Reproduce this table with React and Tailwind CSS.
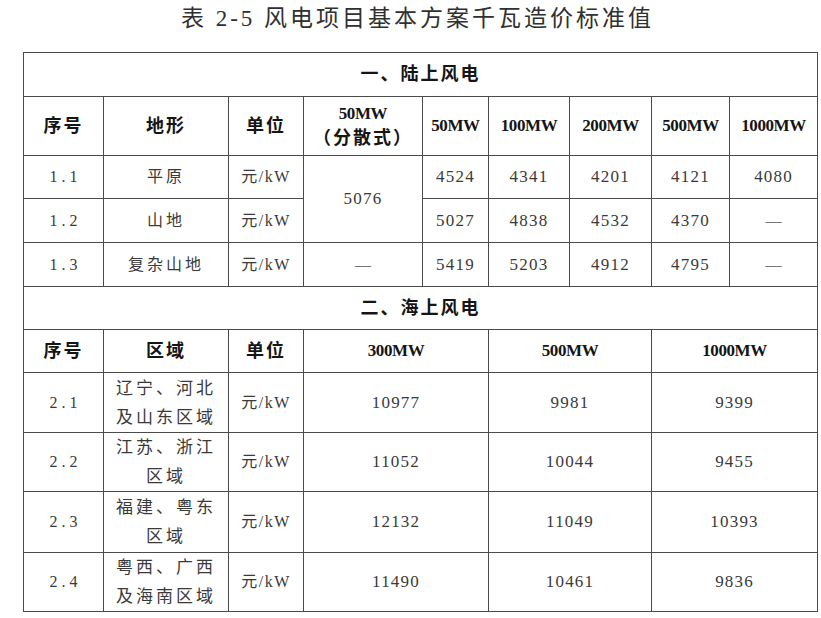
import React from 'react';

const font = { fontFamily: "'Liberation Serif', 'Noto Sans CJK SC', serif" };

const cell = 'border-[1.5px] border-[#4b4b4b] text-center align-middle p-0';
const head = `${cell} font-bold text-[#151515] text-[18px] tracking-[2px]`;
const mw = `${cell} font-bold text-[#151515] text-[17px] tracking-[-0.4px]`;
const body = `${cell} text-[#3a3a3a] text-[17px] tracking-[1.2px]`;
const unit = `${cell} text-[#3a3a3a] text-[16px] tracking-[1.5px]`;
const num = `${cell} text-[#3a3a3a] text-[16px] tracking-[4px] pl-[4px]`;
const zh = `${cell} text-[#3a3a3a] text-[16px] tracking-[3px]`;
const dash = `${cell} text-[#777] text-[16px]`;

const land = [
  { no: '1.1', name: '平原', vals: ['4524', '4341', '4201', '4121', '4080'] },
  { no: '1.2', name: '山地', vals: ['5027', '4838', '4532', '4370', '—'] },
  { no: '1.3', name: '复杂山地', vals: ['5419', '5203', '4912', '4795', '—'] },
];

const sea = [
  { no: '2.1', lines: ['辽宁、河北', '及山东区域'], vals: ['10977', '9981', '9399'], h: 'h-[60px]' },
  { no: '2.2', lines: ['江苏、浙江', '区域'], vals: ['11052', '10044', '9455'], h: 'h-[59px]' },
  { no: '2.3', lines: ['福建、粤东', '区域'], vals: ['12132', '11049', '10393'], h: 'h-[61px]' },
  { no: '2.4', lines: ['粤西、广西', '及海南区域'], vals: ['11490', '10461', '9836'], h: 'h-[58px]' },
];

const Val = ({ v }) => (
  <td className={v === '—' ? dash : body}>{v}</td>
);

export default function App() {
  return (
    <div className="w-[821px] h-[618px] bg-white overflow-hidden" style={font}>
      <div className="h-[52px] flex justify-center pt-[3px]">
        <h1 className="text-[23px] leading-[32px] tracking-[3px] text-[#303030] font-normal pl-[14px]">
          表 2-5 风电项目基本方案千瓦造价标准值
        </h1>
      </div>
      <table className="ml-[23px] w-[794px] table-fixed border-collapse">
        <colgroup>
          <col className="w-[80px]" />
          <col className="w-[125px]" />
          <col className="w-[75px]" />
          <col className="w-[119px]" />
          <col className="w-[66px]" />
          <col className="w-[81px]" />
          <col className="w-[82px]" />
          <col className="w-[78px]" />
          <col className="w-[88px]" />
        </colgroup>
        <tbody>
          <tr className="h-[44px]">
            <td colSpan={9} className={head}>一、陆上风电</td>
          </tr>
          <tr className="h-[59px]">
            <td className={head}>序号</td>
            <td className={head}>地形</td>
            <td className={head}>单位</td>
            <td className={`${mw} leading-[24px]`}>
              <div>50MW</div>
              <div className="text-[18px] tracking-[2px]">（分散式）</div>
            </td>
            <td className={mw}>50MW</td>
            <td className={mw}>100MW</td>
            <td className={mw}>200MW</td>
            <td className={mw}>500MW</td>
            <td className={mw}>1000MW</td>
          </tr>
          {land.map((r, i) => (
            <tr key={r.no} className={i === 0 ? 'h-[43px]' : 'h-[44px]'}>
              <td className={num}>{r.no}</td>
              <td className={zh}>{r.name}</td>
              <td className={unit}>元/kW</td>
              {i === 0 && <td rowSpan={2} className={body}>5076</td>}
              {i === 2 && <td className={dash}>—</td>}
              {r.vals.map((v, j) => <Val key={j} v={v} />)}
            </tr>
          ))}
          <tr className="h-[43px]">
            <td colSpan={9} className={head}>二、海上风电</td>
          </tr>
          <tr className="h-[43px]">
            <td className={head}>序号</td>
            <td className={head}>区域</td>
            <td className={head}>单位</td>
            <td colSpan={2} className={mw}>300MW</td>
            <td colSpan={2} className={mw}>500MW</td>
            <td colSpan={2} className={mw}>1000MW</td>
          </tr>
          {sea.map((r) => (
            <tr key={r.no} className={r.h}>
              <td className={num}>{r.no}</td>
              <td className={`${zh} text-[17px] leading-[29px] tracking-[2.5px]`}>
                {r.lines.map((l) => <div key={l}>{l}</div>)}
              </td>
              <td className={unit}>元/kW</td>
              {r.vals.map((v, j) => (
                <td key={j} colSpan={2} className={body}>{v}</td>
              ))}
            </tr>
          ))}
        </tbody>
      </table>
    </div>
  );
}
